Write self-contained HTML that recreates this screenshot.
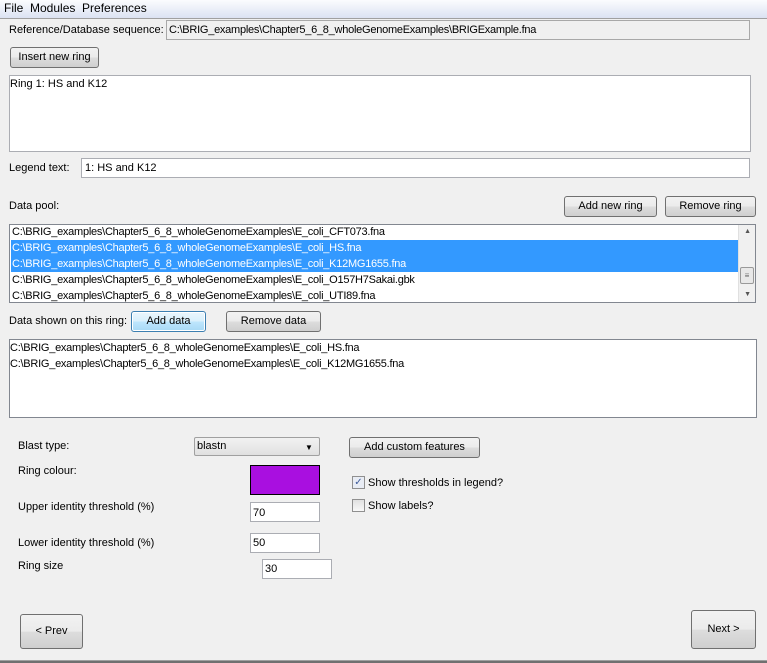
<!DOCTYPE html><html><head><style>
body{margin:0;width:767px;height:663px;background:#f0f0f0;font-family:"Liberation Sans",sans-serif;font-size:11px;color:#000;position:relative;overflow:hidden}
div{position:absolute;box-sizing:border-box}
.t{white-space:nowrap;line-height:13px}
.btn{border:1px solid #707070;border-radius:3px;background:linear-gradient(#f2f2f2 0%,#ebebeb 50%,#dddddd 51%,#cfcfcf 100%);text-align:center;white-space:nowrap}
.in{background:#fff;border:1px solid #abadb3}
.row{left:1px;right:17px;height:16px;line-height:16px;padding-left:1px;white-space:nowrap;letter-spacing:-0.25px}
.p{letter-spacing:-0.25px}
.sel{background:#3399ff;color:#fff}
</style></head><body>
<div style="left:0;top:0;width:767px;height:19px;background:linear-gradient(#fbfcfe,#dbe2f2);border-bottom:1px solid #a0a0a0"></div>
<div class="t" style="left:4px;top:2px;font-size:12px">File&nbsp;&nbsp;Modules&nbsp;&nbsp;Preferences</div>
<div class="t" style="left:9px;top:24px">Reference/Database sequence:</div>
<div style="left:166px;top:20px;width:584px;height:20px;border:1px solid #a8a8a8;background:#f0f0f0"></div>
<div class="t p" style="left:169px;top:24px">C:\BRIG_examples\Chapter5_6_8_wholeGenomeExamples\BRIGExample.fna</div>
<div class="btn" style="left:10px;top:47px;width:89px;height:21px;line-height:19px">Insert new ring</div>
<div class="in" style="left:9px;top:75px;width:742px;height:77px"></div>
<div class="t" style="left:10px;top:78px">Ring 1: HS and K12</div>
<div class="t" style="left:9px;top:162px">Legend text:</div>
<div class="in" style="left:81px;top:158px;width:669px;height:20px"></div>
<div class="t" style="left:85px;top:162px">1: HS and K12</div>
<div class="t" style="left:9px;top:200px">Data pool:</div>
<div class="btn" style="left:564px;top:196px;width:93px;height:21px;line-height:19px">Add new ring</div>
<div class="btn" style="left:665px;top:196px;width:91px;height:21px;line-height:19px">Remove ring</div>
<div class="in" style="left:9px;top:224px;width:747px;height:79px;border-color:#828790">
<div class="row" style="top:-1px">C:\BRIG_examples\Chapter5_6_8_wholeGenomeExamples\E_coli_CFT073.fna</div>
<div class="row sel" style="top:15px">C:\BRIG_examples\Chapter5_6_8_wholeGenomeExamples\E_coli_HS.fna</div>
<div class="row sel" style="top:31px">C:\BRIG_examples\Chapter5_6_8_wholeGenomeExamples\E_coli_K12MG1655.fna</div>
<div class="row" style="top:47px">C:\BRIG_examples\Chapter5_6_8_wholeGenomeExamples\E_coli_O157H7Sakai.gbk</div>
<div class="row" style="top:63px">C:\BRIG_examples\Chapter5_6_8_wholeGenomeExamples\E_coli_UTI89.fna</div>
<div style="right:0;top:0;width:17px;height:77px;background:#f0f0f0;border-left:1px solid #e0e0e0"></div>
<div style="right:4px;top:3px;font-size:7px;color:#555">▲</div>
<div style="right:1px;top:42px;width:14px;height:17px;border:1px solid #999;border-radius:2px;background:#e8e8e8;font-size:8px;text-align:center;line-height:15px;color:#666">≡</div>
<div style="right:4px;top:66px;font-size:7px;color:#555">▼</div>
</div>
<div class="t" style="left:9px;top:315px">Data shown on this ring:</div>
<div class="btn" style="left:131px;top:311px;width:75px;height:21px;line-height:19px;border-color:#3c7fb1;background:linear-gradient(#eaf6fd,#d9f0fc 50%,#bee6fd 51%,#a7d9f5);box-shadow:inset 0 0 0 1px #fff">Add data</div>
<div class="btn" style="left:226px;top:311px;width:95px;height:21px;line-height:19px">Remove data</div>
<div class="in" style="left:9px;top:339px;width:748px;height:79px;border-color:#828790"></div>
<div class="t p" style="left:10px;top:342px">C:\BRIG_examples\Chapter5_6_8_wholeGenomeExamples\E_coli_HS.fna</div>
<div class="t p" style="left:10px;top:358px">C:\BRIG_examples\Chapter5_6_8_wholeGenomeExamples\E_coli_K12MG1655.fna</div>
<div class="t" style="left:18px;top:440px">Blast type:</div>
<div style="left:194px;top:437px;width:126px;height:19px;border:1px solid #a0a0a0;border-radius:2px;background:linear-gradient(#f2f2f2,#e0e0e0)"></div>
<div class="t" style="left:197px;top:440px">blastn</div>
<div class="t" style="left:305px;top:441px;font-size:8px">▼</div>
<div class="btn" style="left:349px;top:437px;width:131px;height:21px;line-height:19px">Add custom features</div>
<div class="t" style="left:18px;top:465px">Ring colour:</div>
<div style="left:250px;top:465px;width:70px;height:30px;background:#a90fe0;border:1px solid #000"></div>
<div style="left:352px;top:476px;width:13px;height:13px;border:1px solid #8f8f8f;background:#e8ecf4;font-size:10px;line-height:11px;text-align:center;color:#3c5a9a">✓</div>
<div class="t" style="left:368px;top:477px">Show thresholds in legend?</div>
<div style="left:352px;top:499px;width:13px;height:13px;border:1px solid #8f8f8f;background:linear-gradient(#e0e0e0,#f8f8f8)"></div>
<div class="t" style="left:368px;top:500px">Show labels?</div>
<div class="t" style="left:18px;top:501px">Upper identity threshold (%)</div>
<div class="in" style="left:250px;top:502px;width:70px;height:20px"></div>
<div class="t" style="left:253px;top:507px">70</div>
<div class="t" style="left:18px;top:537px">Lower identity threshold (%)</div>
<div class="in" style="left:250px;top:533px;width:70px;height:20px"></div>
<div class="t" style="left:253px;top:537px">50</div>
<div class="t" style="left:18px;top:560px">Ring size</div>
<div class="in" style="left:262px;top:559px;width:70px;height:20px"></div>
<div class="t" style="left:265px;top:563px">30</div>
<div class="btn" style="left:20px;top:614px;width:63px;height:35px;line-height:33px">&lt; Prev</div>
<div class="btn" style="left:691px;top:610px;width:65px;height:39px;line-height:37px">Next &gt;</div>
<div style="left:0;top:660px;width:767px;height:3px;background:#707070;border-top:1px solid #a0a0a0"></div>
</body></html>
